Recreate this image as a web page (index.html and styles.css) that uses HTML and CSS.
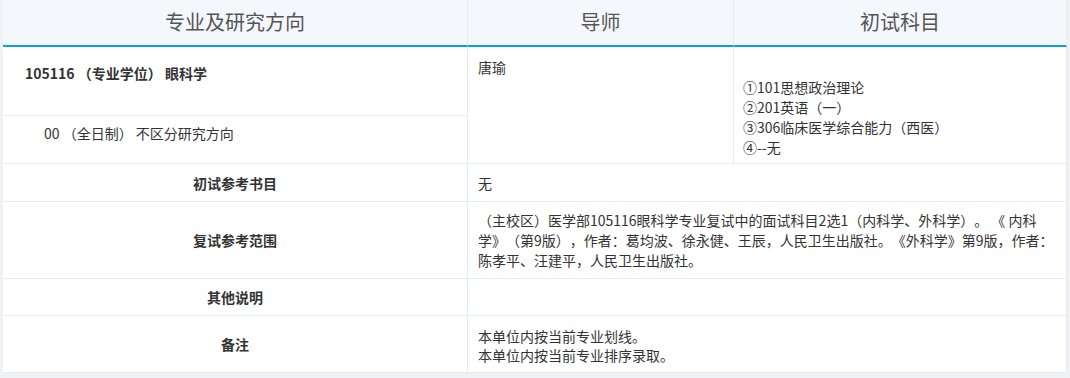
FILE: index.html
```html
<!DOCTYPE html>
<html lang="zh-CN">
  <head>
    <meta charset="UTF-8" />
    <meta name="viewport" content="width=device-width, initial-scale=1.0" />
    <title>专业目录</title>
    <link rel="stylesheet" href="styles.css">
  </head>
  <body>
    <table class="zsml">
      <colgroup>
        <col class="col-major" />
        <col class="col-tutor" />
        <col class="col-exam" />
      </colgroup>
      <thead>
        <tr class="head-row">
          <th>专业及研究方向</th>
          <th>导师</th>
          <th>初试科目</th>
        </tr>
      </thead>
      <tbody>
        <tr class="row-major">
          <td class="major">105116 （专业学位） 眼科学</td>
          <td class="tutor" rowspan="2">唐瑜</td>
          <td class="exam" rowspan="2">
            <br />①101思想政治理论<br />②201英语（一）<br />③306临床医学综合能力（西医）<br />④--无
          </td>
        </tr>
        <tr class="row-direction">
          <td class="direction">00 （全日制） 不区分研究方向</td>
        </tr>
        <tr class="row-books">
          <td class="label">初试参考书目</td>
          <td class="value" colspan="2">无</td>
        </tr>
        <tr class="row-retest">
          <td class="label">复试参考范围</td>
          <td class="value" colspan="2">（主校区）医学部105116眼科学专业复试中的面试科目2选1（内科学、外科学）。 《 内科学》（第9版），作者：葛均波、徐永健、王辰，人民卫生出版社。《外科学》第9版，作者：陈孝平、汪建平，人民卫生出版社。</td>
        </tr>
        <tr class="row-other">
          <td class="label">其他说明</td>
          <td class="value" colspan="2"></td>
        </tr>
        <tr class="row-note">
          <td class="label">备注</td>
          <td class="value note" colspan="2">本单位内按当前专业划线。<br />本单位内按当前专业排序录取。</td>
        </tr>
      </tbody>
    </table>
  </body>
</html>
```

FILE: styles.css
```css
* {
  box-sizing: border-box;
}
body {
  margin: 0;
  padding: 0 3px;
  background: #eef2f5;
  font-family: "Microsoft YaHei", "Noto Sans CJK SC", sans-serif;
  color: #333;
  text-spacing-trim: space-all;
}
.zsml {
  width: 1064px;
  table-layout: fixed;
  border-collapse: separate;
  border-spacing: 0;
  background: #fff;
  font-size: 14px;
  line-height: 20px;
}
.col-major {
  width: 465px;
}
.col-tutor {
  width: 266px;
}
.col-exam {
  width: 333px;
}
th,
td {
  padding: 0;
  border-right: 1px solid #e6ecf0;
  border-bottom: 1px solid #e6ecf0;
  text-align: left;
  vertical-align: top;
}
/* header */
.head-row {
  height: 47px;
}
.head-row th {
  background: #f4f8fd;
  border-bottom: 2px solid #00a6e4;
  font-size: 20px;
  font-weight: 400;
  color: #555;
  text-align: center;
  vertical-align: middle;
  padding-bottom: 2px;
}
/* major rows */
.row-major {
  height: 69px;
}
.row-direction {
  height: 48px;
}
.major {
  padding: 16px 0 0 22px;
  font-weight: 700;
}
.direction {
  padding: 7px 0 0 41px;
}
.tutor {
  padding: 10px 0 0 10px;
}
.exam {
  padding: 10px 0 0 9px;
}
/* info rows */
.row-books {
  height: 38px;
}
.row-retest {
  height: 77px;
}
.row-other {
  height: 37px;
}
.row-note {
  height: 57px;
}
.label {
  font-weight: 700;
  text-align: center;
  vertical-align: middle;
}
.value {
  padding: 0 12px 0 10px;
  vertical-align: middle;
}
.note {
  line-height: 19px;
  padding-top: 3px;
}
```
